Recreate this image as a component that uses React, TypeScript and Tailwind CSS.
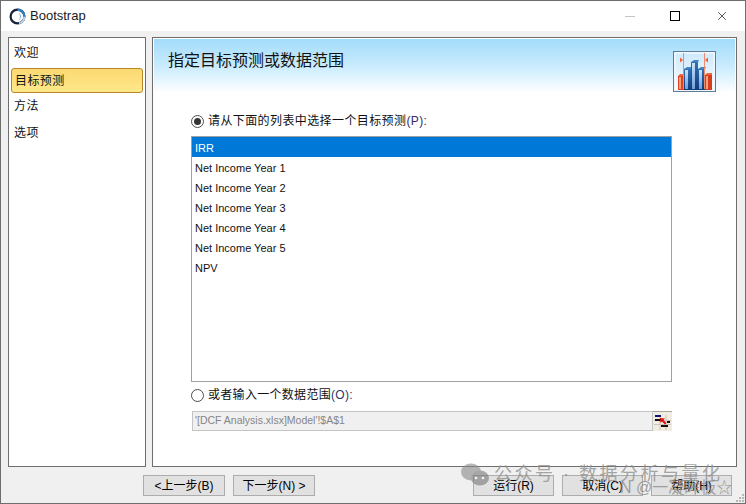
import { X } from "lucide-react";

const font = { fontFamily: '"Liberation Sans", "Noto Sans CJK SC", sans-serif' };

const items = ["IRR", "Net Income Year 1", "Net Income Year 2", "Net Income Year 3", "Net Income Year 4", "Net Income Year 5", "NPV"];

function Logo() {
  return (
    <svg width="17" height="17" viewBox="0 0 17 17" className="shrink-0">
      <circle cx="8.5" cy="8.5" r="6.9" fill="none" stroke="#16223a" strokeWidth="2.2" />
      <path d="M8.5 1.600a6.900 6.900 0 0 1 6.900 6.900" fill="none" stroke="#2f7fc0" strokeWidth="2.2" />
      <path d="M15.400 8.500a6.900 6.900 0 0 1-5.400 6.700" fill="none" stroke="#b8d4ea" strokeWidth="2.2" />
      <path d="M9.500 4.500a4.500 4.500 0 0 1 0 8 6 6 0 0 0 0-8z" fill="#6fa6d2" />
    </svg>
  );
}

function ChartIcon() {
  return (
    <svg width="43" height="41" viewBox="0 0 43 41" className="shrink-0">
      <defs>
        <linearGradient id="sky" x1="0" y1="0" x2="0" y2="1">
          <stop offset="0" stopColor="#cfeafc" />
          <stop offset="1" stopColor="#f2faff" />
        </linearGradient>
        <linearGradient id="blueface" x1="0" y1="0" x2="0" y2="1">
          <stop offset="0" stopColor="#2f72b8" />
          <stop offset="1" stopColor="#0f3a78" />
        </linearGradient>
        <linearGradient id="strip" x1="0" y1="0" x2="0" y2="1">
          <stop offset="0" stopColor="#cfe2f8" />
          <stop offset="1" stopColor="#6f9fdc" />
        </linearGradient>
      </defs>
      <rect x="0.5" y="0.5" width="42" height="40" fill="#dcecf8" stroke="#5f7c98" />
      <rect x="2" y="2" width="39" height="37" fill="url(#sky)" stroke="#ffffff" />
      <rect x="5" y="25" width="6" height="14" fill="#e0431c" />
      <rect x="6" y="26" width="2" height="12" fill="#f5a080" />
      <path d="M5 25l2-2h5l-1 2z" fill="#f0683a" />
      <rect x="32" y="24" width="7" height="15" fill="#d83c18" />
      <rect x="33" y="25" width="2" height="13" fill="#f5a080" />
      <path d="M32 24l2-2h5v2z" fill="#f0683a" />
      <rect x="11" y="18" width="7" height="21" fill="url(#blueface)" />
      <rect x="12" y="19" width="3" height="19" fill="url(#strip)" />
      <path d="M11 18l3-2h5l-1 2z" fill="#3f86c8" />
      <rect x="18" y="11" width="7" height="28" fill="url(#blueface)" />
      <rect x="19" y="12" width="3" height="26" fill="url(#strip)" />
      <path d="M18 11l3-2h5l-1 2z" fill="#3f86c8" />
      <rect x="25" y="18" width="7" height="21" fill="url(#blueface)" />
      <rect x="26" y="19" width="3" height="19" fill="url(#strip)" />
      <path d="M25 18l3-2h5l-1 2z" fill="#3f86c8" />
      <path d="M10.500 2v36M31.500 2v36" stroke="#f08a70" strokeWidth="1" />
      <path d="M7 6.500l3 2.500-3 2.500zM35 6.500l-3 2.500 3 2.500z" fill="#f0603c" />
    </svg>
  );
}

function RangeIcon() {
  return (
    <svg width="19" height="20" viewBox="0 0 19 20" className="shrink-0">
      <rect width="19" height="20" fill="#f0ece2" />
      <rect width="19" height="1" fill="#a8a498" />
      <path d="M1 9.500h17M1 13.500h17M7 4v15M13 4v15" stroke="#c9c5b8" strokeWidth="1" />
      <rect x="2" y="4" width="6" height="2" fill="#10107a" />
      <rect x="2" y="8" width="6" height="2" fill="#111111" />
      <rect x="8" y="14" width="7" height="2" fill="#111111" />
      <rect x="14" y="10" width="3" height="2" fill="#111111" />
      <path d="M7 7l5 .5-1.500 1.500 3 3-1.500 1.500-3-3L7.500 12z" fill="#e01010" />
    </svg>
  );
}

function Radio({ checked }: { checked?: boolean }) {
  return (
    <span className="w-[13px] h-[13px] rounded-full border border-[#4d4d4d] bg-white flex items-center justify-center shrink-0">
      {checked && <span className="w-[7px] h-[7px] rounded-full bg-[#333333]"></span>}
    </span>
  );
}

function Btn({ label, className }: { label: string; className?: string }) {
  return (
    <div className={`h-[21px] bg-[#e1e1e1] border border-[#adadad] flex items-center justify-center text-[12px] text-black ${className ?? ""}`}>
      {label}
    </div>
  );
}

export default function App() {
  return (
    <div style={font} className="relative w-[746px] h-[504px] overflow-hidden bg-[#f0f0f0] border border-[#6e6e6e] flex flex-col text-[12px] text-[#111111]">
      {/* title bar */}
      <div className="h-[30px] shrink-0 bg-white flex items-center pl-[8px]">
        <Logo />
        <span className="ml-[4px] text-[13px] text-[#1a1a1a]">Bootstrap</span>
        <div className="ml-auto flex items-center">
          <span className="w-[10px] h-[1px] bg-[#c4c4c4] mr-[35px]"></span>
          <span className="w-[10px] h-[10px] border border-black mr-[35px]"></span>
          <X size={14} strokeWidth={1.2} color="#111" className="mr-[16px]" />
        </div>
      </div>

      {/* body */}
      <div className="h-[430px] mt-[6px] shrink-0 flex pl-[7px] pr-[8px] gap-[6px]">
        <div className="w-[138px] border border-[#6e6e6e] bg-white flex flex-col pt-[3px] text-[12px]">
          <div className="h-[24px] pl-[5px] flex items-center tracking-[0.4px]">欢迎</div>
          <div className="mt-[3px] mx-[2px] h-[25px] rounded-[3px] border border-[#b5862a] bg-gradient-to-b from-[#fbd971] to-[#ffe88a] pl-[3px] flex items-center tracking-[0.4px]">目标预测</div>
          <div className="h-[26px] pl-[5px] flex items-center tracking-[0.4px]">方法</div>
          <div className="h-[26px] mt-[1px] pl-[5px] flex items-center tracking-[0.4px]">选项</div>
        </div>

        <div className="flex-1 border border-[#6e6e6e] bg-white p-[1px] flex flex-col">
          <div className="h-[54px] shrink-0 bg-gradient-to-b from-[#a3dcfb] via-[#c9ebfd] to-white flex items-start pl-[14px] pr-[19px] pt-[12px]">
            <span className="text-[16px] leading-[20px] text-[#111111]">指定目标预测或数据范围</span>
            <span className="ml-auto"><ChartIcon /></span>
          </div>
          <div className="flex-1 flex flex-col pl-[37px] pr-[63px] pt-[20px]">
            <div className="h-[16px] flex items-center gap-[4px]">
              <Radio checked />
              <span className="tracking-[0.4px]">请从下面的列表中选择一个目标预测<span className="text-[#3a2a6a]">(P):</span></span>
            </div>
            <div className="mt-[7px] h-[246px] shrink-0 border border-[#a0a0a0] text-[11px]">
              {items.map((t, i) => (
                <div key={t} className={`h-[20px] pl-[3px] pt-[2px] flex items-center ${i === 0 ? "bg-[#0078d7] text-white" : "text-[#111111]"}`}>
                  {t}
                </div>
              ))}
            </div>
            <div className="mt-[5px] h-[16px] flex items-center gap-[4px]">
              <Radio />
              <span className="tracking-[0.3px]">或者输入一个数据范围<span className="text-[#2a3a6a]">(O):</span></span>
            </div>
            <div className="mt-[8px] h-[20px] flex">
              <div className="ml-[1px] flex-1 border border-[#c4c4c4] bg-[#f0f0f0] pl-[2px] flex items-center text-[#858585] text-[10.5px]">
                '[DCF Analysis.xlsx]Model'!$A$1
              </div>
              <RangeIcon />
            </div>
          </div>
        </div>
      </div>

      {/* footer buttons */}
      <div className="flex mt-[8px] pl-[142px] pr-[13px]">
        <Btn label="<上一步(B)" className="w-[82px]" />
        <Btn label="下一步(N) >" className="w-[82px] ml-[8px]" />
        <Btn label="运行(R)" className="w-[81px] ml-auto" />
        <Btn label="取消(C)" className="w-[81px] ml-[8px]" />
        <Btn label="帮助(H)" className="w-[81px] ml-[8px]" />
      </div>

      {/* watermark over the buttons */}
      <div className="absolute left-[460px] top-[460px] flex items-center text-[#8f8f8f]/80 pointer-events-none">
        <svg width="28" height="24" viewBox="0 0 28 24" className="opacity-60">
          <ellipse cx="10" cy="9" rx="10" ry="8.500" fill="#8a8a8a" />
          <ellipse cx="19" cy="15" rx="9" ry="7.500" fill="#777777" />
          <circle cx="15" cy="15" r="1.300" fill="#ffffff" />
          <circle cx="22" cy="15" r="1.300" fill="#ffffff" />
        </svg>
        <span className="ml-[5px] text-[18px] tracking-[2.500px] whitespace-nowrap">公众号 · 数据分析与量化</span>
      </div>
      <div className="absolute left-[619px] top-[475px] text-[16px] leading-[24px] text-[#8a8a8a]/80 whitespace-nowrap pointer-events-none">
        N @一凝眸板☆
      </div>

      {/* resize grip */}
      <svg width="10" height="10" viewBox="0 0 10 10" className="absolute right-[0px] bottom-[0px]">
        <path d="M7 1h2v2H7zM4 4h2v2H4zM7 4h2v2H7zM1 7h2v2H1zM4 7h2v2H4zM7 7h2v2H7z" fill="#b8b8b8" />
      </svg>
    </div>
  );
}
